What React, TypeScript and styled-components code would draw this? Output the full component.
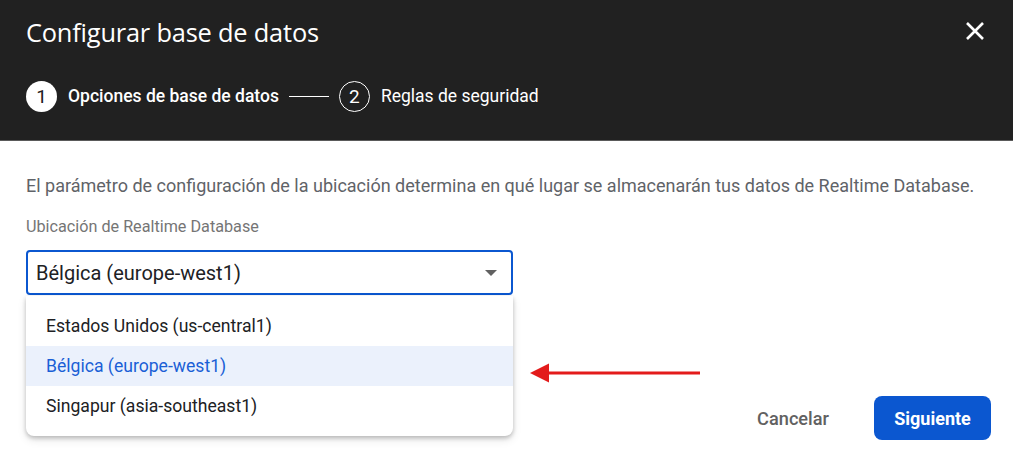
import React from "react";
import styled, { createGlobalStyle } from "styled-components";

const Global = createGlobalStyle`
  html, body { margin: 0; padding: 0; background: #ffffff; }
  body { font-family: Roboto, "Noto Sans", Arial, sans-serif; }
  * { box-sizing: border-box; }
`;

const Dialog = styled.div`
  position: relative;
  width: 1013px;
  height: 465px;
  background: #ffffff;
  overflow: hidden;
  display: flex;
  flex-direction: column;
`;

const Header = styled.header`
  background: #212121;
  height: 141px;
  border-bottom: 1px solid #5a5a5a;
  padding: 16px 26px 0 26px;
  display: flex;
  flex-direction: column;
`;

const TitleRow = styled.div`
  display: flex;
  align-items: center;
  justify-content: space-between;
  height: 32px;
`;

const Title = styled.h1`
  margin: 0;
  font-family: "Open Sans", Roboto, sans-serif;
  font-weight: 400;
  font-size: 25.4px;
  letter-spacing: -0.2px;
  color: #ffffff;
`;

const CloseButton = styled.button`
  background: none;
  border: none;
  padding: 0;
  margin-right: 2px;
  margin-top: -2px;
  width: 20px;
  height: 20px;
  display: flex;
  align-items: center;
  justify-content: center;
  cursor: pointer;
`;

const Stepper = styled.div`
  display: flex;
  align-items: center;
  margin-top: 32px;
  height: 32px;
`;

const StepCircle = styled.div<{ $active?: boolean }>`
  width: 31px;
  height: 31px;
  border-radius: 50%;
  display: flex;
  align-items: center;
  justify-content: center;
  font-size: 19px;
  background: ${(p) => (p.$active ? "#ffffff" : "transparent")};
  color: ${(p) => (p.$active ? "#212121" : "#ffffff")};
  border: ${(p) => (p.$active ? "none" : "1.5px solid #ffffff")};
`;

const StepLabel = styled.span<{ $active?: boolean }>`
  margin-left: 11px;
  font-size: 17.5px;
  font-weight: ${(p) => (p.$active ? 500 : 400)};
  color: #ffffff;
`;

const StepLine = styled.div`
  width: 40px;
  height: 1px;
  background: #ffffff;
  margin: 0 10px 0 10px;
`;

const Body = styled.main`
  flex: 1;
  padding: 33px 26px 0 26px;
  display: flex;
  flex-direction: column;
`;

const Description = styled.p`
  margin: 0;
  font-size: 18px;
  line-height: 24px;
  color: #5f6368;
`;

const FieldLabel = styled.label`
  margin-top: 19px;
  font-size: 16.2px;
  line-height: 20px;
  color: #757575;
`;

const SelectBox = styled.div`
  margin-top: 13px;
  width: 487px;
  height: 45px;
  border: 2px solid #0b57d0;
  border-radius: 4px;
  display: flex;
  align-items: center;
  justify-content: space-between;
  padding: 0 14px 0 8px;
  font-size: 20px;
  color: #202124;
`;

const Caret = styled.span`
  width: 0;
  height: 0;
  border-left: 6px solid transparent;
  border-right: 6px solid transparent;
  border-top: 6px solid #616161;
`;

const Menu = styled.ul`
  position: absolute;
  left: 26px;
  top: 296px;
  width: 487px;
  margin: 0;
  padding: 10px 0;
  list-style: none;
  background: #ffffff;
  border-radius: 0 0 8px 8px;
  box-shadow: 0 2px 4px rgba(0, 0, 0, 0.22), 0 4px 10px rgba(0, 0, 0, 0.1);
  z-index: 2;
`;

const MenuItem = styled.li<{ $selected?: boolean }>`
  height: 40px;
  display: flex;
  align-items: center;
  padding-left: 20px;
  font-size: 17.6px;
  color: ${(p) => (p.$selected ? "#1a5fd6" : "#202124")};
  background: ${(p) => (p.$selected ? "#ebf1fc" : "transparent")};
`;

const Footer = styled.footer`
  display: flex;
  justify-content: flex-end;
  align-items: center;
  gap: 29px;
  padding: 0 22px 25px 0;
`;

const TextButton = styled.button`
  background: none;
  border: none;
  font-family: Roboto, sans-serif;
  font-size: 18.2px;
  font-weight: 500;
  color: #616161;
  padding: 0 16px;
  height: 44px;
`;

const PrimaryButton = styled.button`
  background: #0b57d0;
  border: none;
  border-radius: 8px;
  font-family: Roboto, sans-serif;
  font-size: 18px;
  font-weight: 700;
  color: #ffffff;
  width: 117px;
  height: 44px;
`;

const Annotation = styled.svg`
  position: absolute;
  left: 528px;
  top: 362px;
  z-index: 3;
`;

export default function App() {
  return (
    <>
      <Global />
      <Dialog>
        <Header>
          <TitleRow>
            <Title>Configurar base de datos</Title>
            <CloseButton aria-label="Cerrar">
              <svg width="18" height="18" viewBox="0 0 18 18">
                <path d="M1 1 L17 17 M17 1 L1 17" stroke="#ffffff" strokeWidth="2.6" strokeLinecap="butt" />
              </svg>
            </CloseButton>
          </TitleRow>
          <Stepper>
            <StepCircle $active>1</StepCircle>
            <StepLabel $active>Opciones de base de datos</StepLabel>
            <StepLine />
            <StepCircle>2</StepCircle>
            <StepLabel>Reglas de seguridad</StepLabel>
          </Stepper>
        </Header>
        <Body>
          <Description>
            El parámetro de configuración de la ubicación determina en qué lugar se almacenarán tus datos de Realtime Database.
          </Description>
          <FieldLabel>Ubicación de Realtime Database</FieldLabel>
          <SelectBox>
            <span>Bélgica (europe-west1)</span>
            <Caret />
          </SelectBox>
        </Body>
        <Footer>
          <TextButton>Cancelar</TextButton>
          <PrimaryButton>Siguiente</PrimaryButton>
        </Footer>
        <Menu>
          <MenuItem>Estados Unidos (us-central1)</MenuItem>
          <MenuItem $selected>Bélgica (europe-west1)</MenuItem>
          <MenuItem>Singapur (asia-southeast1)</MenuItem>
        </Menu>
        <Annotation width="176" height="22" viewBox="0 0 176 22">
          <line x1="18" y1="11" x2="172" y2="11" stroke="#e31b1b" strokeWidth="3" />
          <polygon points="2,11 21,1.5 21,20.5" fill="#e31b1b" />
        </Annotation>
      </Dialog>
    </>
  );
}
